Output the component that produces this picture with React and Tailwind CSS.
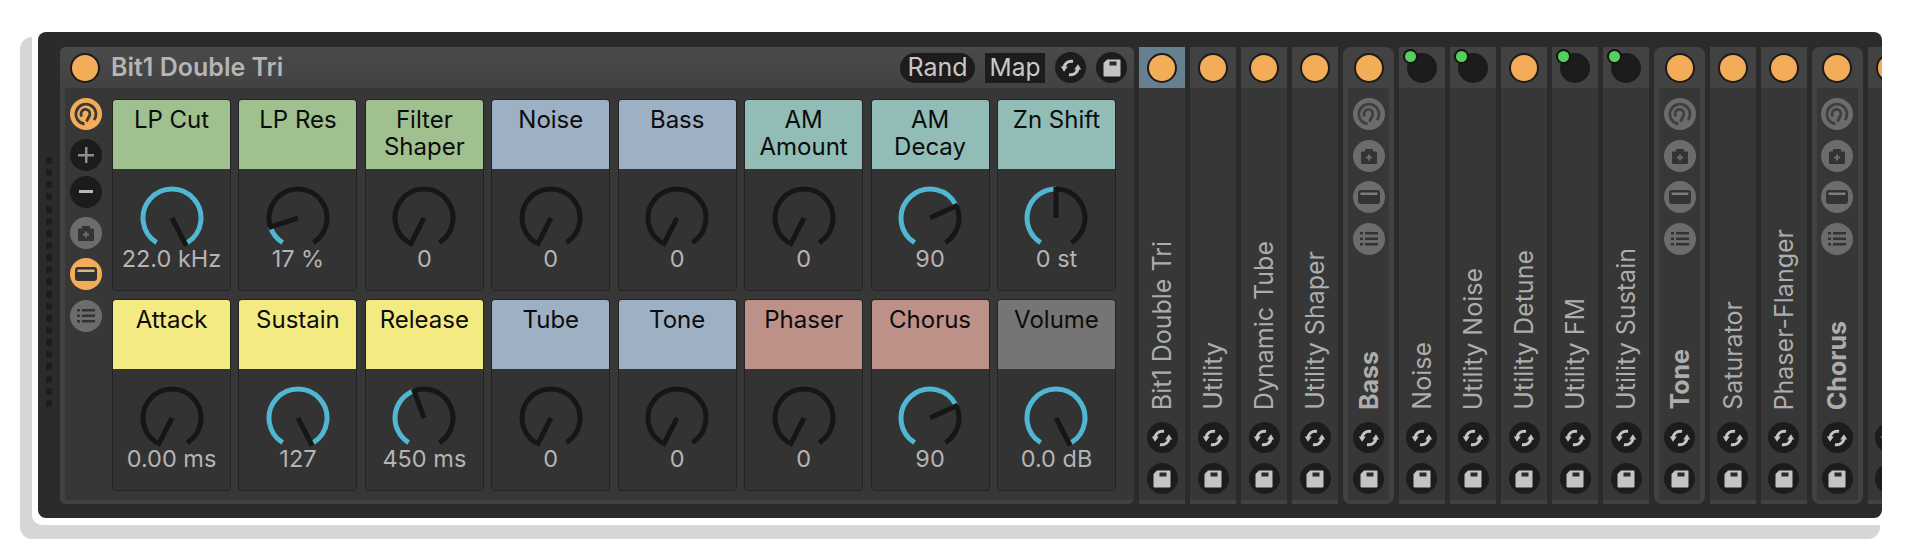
const font = { fontFamily: 'Inter, "Liberation Sans", sans-serif' }

// knob geometry: arc runs from -148deg to +148deg, 0deg is straight up
const polar = (cx, cy, r, deg) => {
  const a = ((deg - 90) * Math.PI) / 180
  return [cx + r * Math.cos(a), cy + r * Math.sin(a)]
}

const arc = (cx, cy, r, from, to) => {
  const [x1, y1] = polar(cx, cy, r, from)
  const [x2, y2] = polar(cx, cy, r, to)
  const large = to - from > 180 ? 1 : 0
  return `M${x1} ${y1}A${r} ${r} 0 ${large} 1 ${x2} ${y2}`
}

function Knob({ angle }) {
  const [nx, ny] = polar(33, 33, 31, angle === -148 ? -153 : angle === 148 ? 153 : angle)
  return (
    <svg width="66" height="62" viewBox="0 0 66 62" className="block">
      {angle < 148 && <path d={arc(33, 33, 29, angle, 148)} fill="none" stroke="#161616" strokeWidth="5" />}
      {angle > -148 && <path d={arc(33, 33, 29, -148, angle)} fill="none" stroke="#4fb7d1" strokeWidth="5" />}
      <line x1="33" y1="33" x2={nx} y2={ny} stroke="#161616" strokeWidth="5" />
    </svg>
  )
}

function Card({ label, value, color, angle }) {
  return (
    <div className="flex h-[192px] flex-col overflow-hidden rounded-[4px] border border-[#232323] bg-[#333333]">
      <div className={`h-[69px] pt-[6px] text-center text-[24px] leading-[27px] text-[#0c0c0c] ${color}`}>
        {label.map(l => <div key={l}>{l}</div>)}
      </div>
      <div className="flex flex-col items-center pt-[16px]">
        <Knob angle={angle} />
        <div className="mt-[-1px] text-[23.500px] leading-[26px] text-[#b4b4b4]">{value}</div>
      </div>
    </div>
  )
}

function CycleIcon() {
  return (
    <svg width="22" height="22" viewBox="0 0 22 22" fill="none" stroke="#c4c4c4" strokeWidth="3">
      <path d="M13 4.500C8 3.500 4.500 6.500 4 10.500" />
      <path d="M9 17.500C14 18.500 17.500 15.500 18 11.500" />
      <path d="M0.800 9.500H7.800L4 14.800Z" fill="#c4c4c4" stroke="none" />
      <path d="M21.200 12.500H14.200L18 7.200Z" fill="#c4c4c4" stroke="none" />
    </svg>
  )
}

function SaveIcon() {
  return (
    <svg width="20" height="20" viewBox="0 0 20 20">
      <path d="M5 1.500H17.500Q18.500 1.500 18.500 2.500V17.500Q18.500 18.500 17.500 18.500H2.500Q1.500 18.500 1.500 17.500V5Z" fill="#c4c4c4" />
      <rect x="7.500" y="3.500" width="7" height="4" fill="#2a2a2a" />
    </svg>
  )
}

function DarkCircle({ children, className = '' }) {
  return <div className={`flex h-[31px] w-[31px] shrink-0 items-center justify-center rounded-full bg-[#1c1c1c] ${className}`}>{children}</div>
}

function KnobIcon({ color }) {
  return (
    <svg width="24" height="24" viewBox="0 0 24 24" fill="none" stroke={color} strokeWidth="2.800">
      <path d="M10.500 22A10 10 0 1 1 20 18" />
      <path d="M7.800 14.500A4.500 4.500 0 1 1 15.800 13L12.500 19.500" />
    </svg>
  )
}

function CameraIcon({ color, plus }) {
  return (
    <svg width="20" height="20" viewBox="0 0 20 20">
      <path d="M3 5.500H6V3H14V5.500H17Q18 5.500 18 6.500V17Q18 18 17 18H3Q2 18 2 17V6.500Q2 5.500 3 5.500Z" fill={color} />
      <path d="M9 8.500H11V10.500H13V12.500H11V14.500H9V12.500H7V10.500H9Z" fill={plus} />
    </svg>
  )
}

function PillIcon({ color, bar }) {
  return (
    <svg width="24" height="16" viewBox="0 0 24 16">
      <rect x="1" y="1" width="22" height="14" rx="3" fill={color} />
      <rect x="3.500" y="3.500" width="17" height="2.500" fill={bar} />
    </svg>
  )
}

function ListIcon({ color }) {
  return (
    <svg width="20" height="18" viewBox="0 0 20 18" fill={color}>
      <rect x="1" y="2" width="3" height="2.500" />
      <rect x="6" y="2" width="13" height="2.500" />
      <rect x="1" y="7.500" width="3" height="2.500" />
      <rect x="6" y="7.500" width="13" height="2.500" />
      <rect x="1" y="13" width="3" height="2.500" />
      <rect x="6" y="13" width="13" height="2.500" />
    </svg>
  )
}

function Power({ on = true }) {
  return <div className={`h-[30px] w-[30px] rounded-full border-2 border-[#1b1b1b] ${on ? 'bg-[#f3ad59]' : 'bg-[#1c1c1c]'}`} />
}

const sideBtn = 'flex h-[32px] w-[32px] items-center justify-center rounded-full'

function GroupButtons() {
  return (
    <div className="flex flex-col items-center gap-[9.500px] pt-[10px]">
      <div className={`${sideBtn} bg-[#6c6c6c]`}><KnobIcon color="#3f3f3f" /></div>
      <div className={`${sideBtn} bg-[#6c6c6c]`}><CameraIcon color="#333333" plus="#6c6c6c" /></div>
      <div className={`${sideBtn} bg-[#6c6c6c]`}><PillIcon color="#333333" bar="#7d7d7d" /></div>
      <div className={`${sideBtn} bg-[#6c6c6c]`}><ListIcon color="#333333" /></div>
    </div>
  )
}

function StripBottom({ name, bold }) {
  return (
    <div className="mt-auto flex flex-col items-center">
      <div
        className={`mb-[12px] whitespace-nowrap text-[25px] leading-[26px] text-[#adadad] ${bold ? 'font-bold' : ''}`}
        style={{ writingMode: 'vertical-rl', transform: 'rotate(180deg)' }}
      >
        {name}
      </div>
      <DarkCircle><CycleIcon /></DarkCircle>
      <DarkCircle className="mb-[6px] mt-[10px]"><SaveIcon /></DarkCircle>
    </div>
  )
}

function Strip({ s }) {
  if (s.group) {
    return (
      <div className="flex h-[457px] w-[50.500px] shrink-0 flex-col rounded-[8px] bg-[#424242] px-[5px] pb-[4px]">
        <div className="flex h-[41px] shrink-0 items-center justify-center"><Power /></div>
        <div className="flex flex-1 flex-col items-center bg-[#373737]">
          <GroupButtons />
          <StripBottom name={s.name} bold />
        </div>
      </div>
    )
  }
  return (
    <div className="flex h-[457px] w-[46.100px] shrink-0 flex-col bg-[#424242] pb-[4px]">
      <div className={`relative flex h-[41px] shrink-0 items-center justify-center ${s.sel ? 'bg-[#66808f]' : ''}`}>
        <Power on={!s.off} />
        {s.off && <div className="absolute left-[4px] top-[2px] h-[15px] w-[15px] rounded-full border-2 border-[#141414] bg-[#54d15c]" />}
      </div>
      <div className="flex flex-1 flex-col items-center bg-[#373737]">
        <StripBottom name={s.name} />
      </div>
    </div>
  )
}

const green = 'bg-[#a0c08f]'
const blue = 'bg-[#9eb0c4]'
const teal = 'bg-[#92bdb6]'
const yellow = 'bg-[#f4ea82]'
const rose = 'bg-[#bd9188]'
const grey = 'bg-[#757575]'

const cards = [
  { label: ['LP Cut'], value: '22.0 kHz', color: green, angle: 148 },
  { label: ['LP Res'], value: '17 %', color: green, angle: -108 },
  { label: ['Filter', 'Shaper'], value: '0', color: green, angle: -148 },
  { label: ['Noise'], value: '0', color: blue, angle: -148 },
  { label: ['Bass'], value: '0', color: blue, angle: -148 },
  { label: ['AM', 'Amount'], value: '0', color: teal, angle: -148 },
  { label: ['AM', 'Decay'], value: '90', color: teal, angle: 65 },
  { label: ['Zn Shift'], value: '0 st', color: teal, angle: 0 },
  { label: ['Attack'], value: '0.00 ms', color: yellow, angle: -148 },
  { label: ['Sustain'], value: '127', color: yellow, angle: 148 },
  { label: ['Release'], value: '450 ms', color: yellow, angle: -20 },
  { label: ['Tube'], value: '0', color: blue, angle: -148 },
  { label: ['Tone'], value: '0', color: blue, angle: -148 },
  { label: ['Phaser'], value: '0', color: rose, angle: -148 },
  { label: ['Chorus'], value: '90', color: rose, angle: 65 },
  { label: ['Volume'], value: '0.0 dB', color: grey, angle: 148 },
]

const strips = [
  { name: 'Bit1 Double Tri', sel: true },
  { name: 'Utility' },
  { name: 'Dynamic Tube' },
  { name: 'Utility Shaper' },
  { name: 'Bass', group: true },
  { name: 'Noise', off: true },
  { name: 'Utility Noise', off: true },
  { name: 'Utility Detune' },
  { name: 'Utility FM', off: true },
  { name: 'Utility Sustain', off: true },
  { name: 'Tone', group: true },
  { name: 'Saturator' },
  { name: 'Phaser-Flanger' },
  { name: 'Chorus', group: true },
  { name: '' },
]

export default function App() {
  return (
    <div className="relative h-[551px] w-[1920px] overflow-hidden bg-white pt-[32px] pl-[38px]" style={font}>
      {/* drop shadow behind the panel */}
      <div className="absolute left-[20px] top-[37px] h-[502px] w-[1860px] rounded-[12px] bg-[#d6d6d6]" />
      <div className="absolute left-[32px] top-[32px] h-[493px] w-[1860px] rounded-bl-[10px] bg-white" />

      <div className="relative flex h-[486px] w-[1844px] overflow-hidden rounded-[8px] bg-[#2b2b2b] pt-[15px]">
        <div className="ml-[8px] mt-[110px] flex w-[6px] shrink-0 flex-col gap-[5.150px] self-start">
          {Array.from({ length: 21 }, (_, i) => <div key={i} className="h-[7px] w-[6px] rounded-[2px] bg-[#1d1d1d]" />)}
        </div>

        <div className="ml-[8px] flex h-[457px] w-[1074px] shrink-0 flex-col rounded-[6px] bg-[#424242]">
          <div className="flex h-[41px] shrink-0 items-center rounded-t-[6px] bg-gradient-to-b from-[#4a4a4a] to-[#424242] pl-[10px] pr-[7px]">
            <Power />
            <div className="ml-[11px] text-[25px] font-semibold text-[#b5b5b5]">Bit1 Double Tri</div>
            <div className="ml-auto flex h-[30px] w-[75px] items-center justify-center rounded-full bg-[#1c1c1c] text-[25px] text-[#c8c8c8]">Rand</div>
            <div className="ml-[10px] flex h-[30px] w-[60px] items-center justify-center bg-[#1c1c1c] text-[24.500px] text-[#c8c8c8]">Map</div>
            <DarkCircle className="ml-[10px]"><CycleIcon /></DarkCircle>
            <DarkCircle className="ml-[10px]"><SaveIcon /></DarkCircle>
          </div>

          <div className="ml-[5px] mb-[4px] flex flex-1 bg-[#373737] pt-[11px]">
            <div className="flex w-[41px] shrink-0 flex-col items-center">
              <div className={`${sideBtn} -mt-[1.500px] bg-[#f3ad59]`}><KnobIcon color="#3a3a3a" /></div>
              <div className={`${sideBtn} mt-[9.500px] bg-[#1c1c1c]`}>
                <svg width="16" height="16" viewBox="0 0 16 16" fill="#8c8c8c"><rect x="7" y="0" width="2.500" height="16" /><rect x="0" y="7" width="16" height="2.500" /></svg>
              </div>
              <div className={`${sideBtn} mt-[4.500px] bg-[#1c1c1c]`}>
                <svg width="14" height="4" viewBox="0 0 14 4"><rect width="14" height="3" fill="#b8b8b8" /></svg>
              </div>
              <div className={`${sideBtn} mt-[9.500px] bg-[#6c6c6c]`}><CameraIcon color="#333333" plus="#6c6c6c" /></div>
              <div className={`${sideBtn} mt-[9px] bg-[#f3ad59]`}><PillIcon color="#333333" bar="#d8b48a" /></div>
              <div className={`${sideBtn} mt-[10px] bg-[#6c6c6c]`}><ListIcon color="#333333" /></div>
            </div>
            <div className="ml-[6px] grid w-[1004px] shrink-0 grid-cols-8 content-start gap-x-[7.400px] gap-y-[8px]">
              {cards.map(c => <Card key={c.label.join()} {...c} />)}
            </div>
          </div>
        </div>

        <div className="ml-[5px] flex gap-[5px]">
          {strips.map((s, i) => <Strip key={i} s={s} />)}
        </div>
      </div>
    </div>
  )
}
